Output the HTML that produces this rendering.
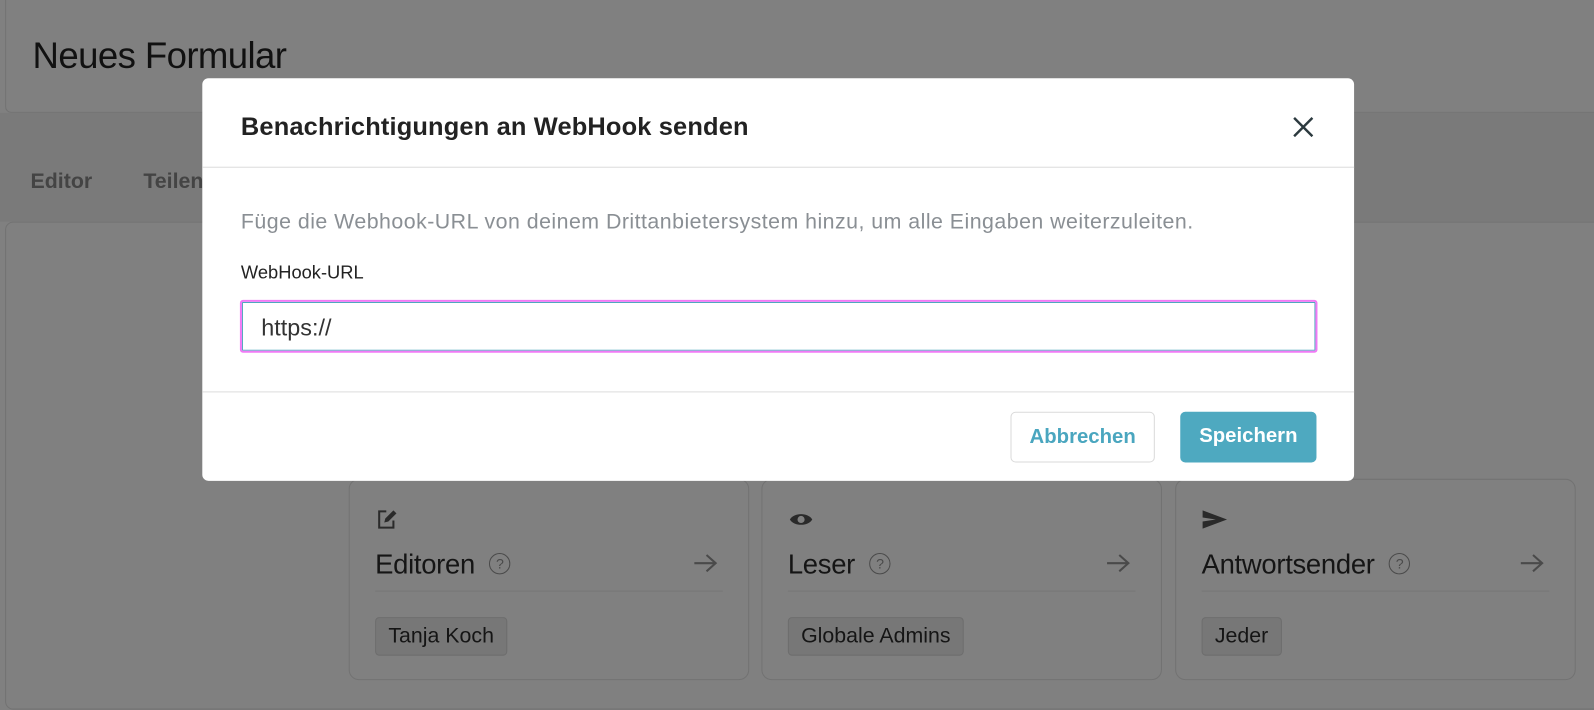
<!DOCTYPE html>
<html><head><meta charset="utf-8"><style>
*{box-sizing:border-box;margin:0;padding:0}
body{width:1594px;height:688px;overflow:hidden;background:#808080;font-family:"Liberation Sans",sans-serif;position:relative}
#w{position:absolute;left:0;top:0;width:1568px;height:677px;transform:scale(1.01658);transform-origin:0 0}
.abs{position:absolute}
.hdr{left:5px;top:0;width:1600px;height:111px;border:1px solid #727272;border-top:none;border-radius:0 0 6px 6px;background:#808080}
.hdr h1{position:absolute;left:26px;top:34px;font-weight:400;font-size:36px;color:#111;letter-spacing:-0.6px}
.tabs{left:0;top:111px;width:1600px;height:107px;background:#7a7a7a}
.tab{top:167px;font-weight:700;font-size:21px;color:#444}
.main{left:5px;top:218px;width:1600px;height:480px;border:1px solid #727272;border-radius:8px;background:#808080}
.card{top:471px;height:198px;width:394px;border:1px solid #727272;border-radius:10px}
.card .t{position:absolute;left:25px;top:68px;font-size:27px;color:#151515;letter-spacing:-0.3px}
.card .q{display:inline-block;width:21px;height:21px;border:1.6px solid #4a4a4a;border-radius:50%;font-size:14px;text-align:center;line-height:18px;color:#4a4a4a;vertical-align:middle;margin-left:14px;position:relative;top:-2px}
.card .ar{position:absolute;right:30px;top:72px}
.card .ln{position:absolute;left:25px;right:25px;top:109px;border-top:1px solid #777}
.card .tag{position:absolute;left:25px;top:135px;height:38px;padding:0 12px;border:1px solid #6d6d6d;border-radius:4px;background:#777;font-size:21px;line-height:36px;color:#151515}
.card .ic{position:absolute;left:25px;top:27px}
.dlg{left:199px;top:77px;width:1133px;height:396px;background:#fff;border-radius:6px}
.dlg h2{position:absolute;left:38px;top:34px;font-size:25px;font-weight:700;color:#222;letter-spacing:0.15px}
.x{position:absolute;right:40px;top:38px}
.dv{position:absolute;left:0;right:0;border-top:1px solid #dcdcdc}
.desc{position:absolute;left:38px;top:130px;font-size:21px;color:#8a8f94;letter-spacing:0.46px}
.lbl{position:absolute;left:38px;top:181px;font-size:18px;color:#222}
.inp{position:absolute;left:37px;top:218px;width:1060px;height:52px;border:2px solid #f07af5;border-radius:3px;box-shadow:inset 0 0 0 1px #4fa8be}
.inp span{position:absolute;left:19px;top:12px;font-size:23px;color:#333}
.btn{position:absolute;top:328px;height:50px;border-radius:5px;font-size:20px;font-weight:700;text-align:center;line-height:48px}
</style></head><body><div id="w">
<div class="abs hdr"><h1>Neues Formular</h1></div>
<div class="abs tabs"></div>
<div class="abs tab" style="left:30px">Editor</div>
<div class="abs tab" style="left:141px">Teilen</div>
<div class="abs main"></div>

<div class="abs card" style="left:343px">
 <svg class="ic" width="24" height="24" viewBox="0 0 24 24"><path d="M11 4H4v16h14v-7" fill="none" stroke="#2a2a2a" stroke-width="2"/><path d="M9 15l1-4 8-8 3 3-8 8z" fill="#2a2a2a"/></svg>
 <div class="t">Editoren<span class="q">?</span></div>
 <svg class="ar" width="24" height="20" viewBox="0 0 24 20"><path d="M1 10H22M13 2L22 10L13 18" fill="none" stroke="#4a4a4a" stroke-width="2"/></svg>
 <div class="ln"></div><div class="tag">Tanja Koch</div></div>
<div class="abs card" style="left:749px">
 <svg class="ic" width="26" height="24" viewBox="0 0 26 24"><path d="M2 12C6 5 20 5 24 12C20 19 6 19 2 12Z" fill="#2a2a2a"/><circle cx="13" cy="12" r="3.5" fill="#808080"/></svg>
 <div class="t">Leser<span class="q">?</span></div>
 <svg class="ar" width="24" height="20" viewBox="0 0 24 20"><path d="M1 10H22M13 2L22 10L13 18" fill="none" stroke="#4a4a4a" stroke-width="2"/></svg>
 <div class="ln"></div><div class="tag">Globale Admins</div></div>
<div class="abs card" style="left:1156px">
 <svg class="ic" width="26" height="24" viewBox="0 0 26 24"><path d="M1 3L25 12L1 21L1 14L14 12L1 10Z" fill="#2a2a2a"/></svg>
 <div class="t">Antwortsender<span class="q">?</span></div>
 <svg class="ar" width="24" height="20" viewBox="0 0 24 20"><path d="M1 10H22M13 2L22 10L13 18" fill="none" stroke="#4a4a4a" stroke-width="2"/></svg>
 <div class="ln"></div><div class="tag">Jeder</div></div>

<div class="abs dlg">
 <h2>Benachrichtigungen an WebHook senden</h2>
 <svg class="x" width="20" height="20" viewBox="0 0 20 20"><path d="M1 1L19 19M19 1L1 19" stroke="#2c3a3f" stroke-width="2.4"/></svg>
 <div class="dv" style="top:87px"></div>
 <div class="desc">Füge die Webhook-URL von deinem Drittanbietersystem hinzu, um alle Eingaben weiterzuleiten.</div>
 <div class="lbl">WebHook-URL</div>
 <div class="inp"><span>https://</span></div>
 <div class="dv" style="top:308px"></div>
 <div class="btn" style="left:795px;width:142px;border:1px solid #dadada;color:#4aa6bf">Abbrechen</div>
 <div class="btn" style="left:962px;width:134px;background:#4ea9c0;color:#fff">Speichern</div>
</div>
</div></body></html>
